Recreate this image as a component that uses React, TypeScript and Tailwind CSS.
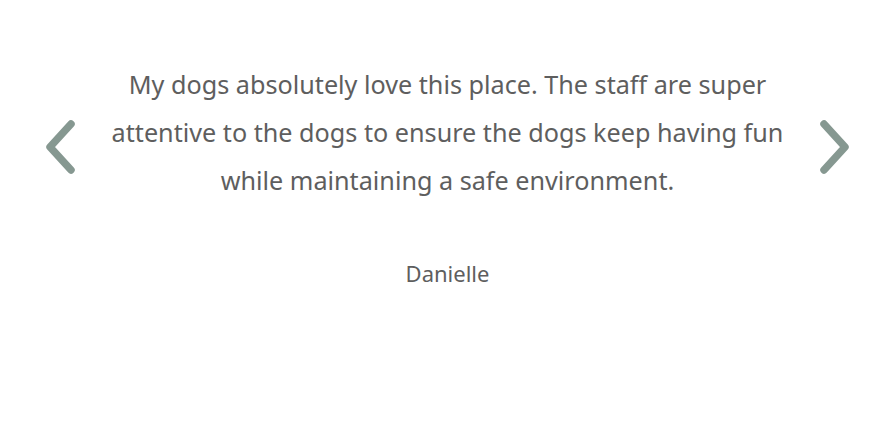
import React from "react";

function Chevron({ dir }: { dir: "left" | "right" }) {
  return (
    <svg width="40" height="56" viewBox="0 0 40 56" fill="none" className="shrink-0">
      <polyline
        points={dir === "left" ? "31,5 10,28 31,51" : "9,5 30,28 9,51"}
        stroke="#869891"
        strokeWidth="7.5"
        strokeLinecap="round"
        strokeLinejoin="round"
      />
    </svg>
  );
}

export default function App() {
  return (
    <div className="h-[425px] w-full bg-white" style={{ fontFamily: '"Noto Sans", sans-serif' }}>
      <div className="flex items-start justify-between pl-[40px] pr-[37px] pt-[60px]">
        <button className="mt-[59px]" aria-label="Previous">
          <Chevron dir="left" />
        </button>
        <div className="flex w-[720px] flex-col items-center text-center">
          <p className="text-[25.2px] leading-[48px] text-[#5e5e5e]">
            My dogs absolutely love this place. The staff are super attentive to the dogs to ensure the dogs keep having
            fun while maintaining a safe environment.
          </p>
          <p className="mt-[54px] text-[22px] leading-[30px] text-[#5e5e5e]">Danielle</p>
        </div>
        <button className="mt-[59px]" aria-label="Next">
          <Chevron dir="right" />
        </button>
      </div>
    </div>
  );
}
